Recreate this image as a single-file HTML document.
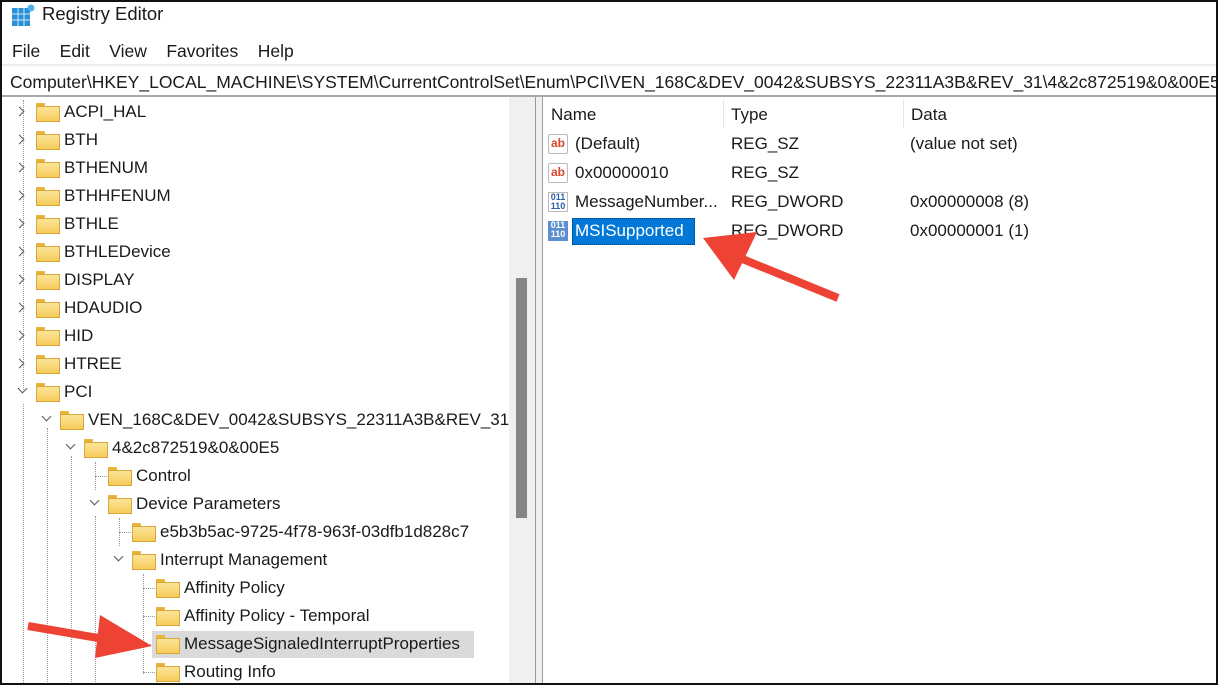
<!DOCTYPE html>
<html><head><meta charset="utf-8"><style>
*{margin:0;padding:0;box-sizing:border-box}
html,body{overflow:hidden}
body{width:1218px;height:685px;background:#fff;font-family:"Liberation Sans",sans-serif;color:#1a1a1a;position:relative}
.a{position:absolute;white-space:nowrap}
.t{font-size:17px;line-height:28px}
.f{position:absolute;width:22px;height:17px}
.f:before{content:"";position:absolute;left:0;top:0;width:9px;height:4px;background:#e8b43a;border-radius:1px 1px 0 0}
.f:after{content:"";position:absolute;left:0;top:3px;width:22px;height:14px;background:linear-gradient(#fbe59b,#f5cc5a);border:1px solid #dba73a}
.ch{position:absolute;width:7px;height:7px;border-right:1.5px solid #555;border-bottom:1.5px solid #555}
.r{transform:rotate(-45deg)}
.d{transform:rotate(45deg)}
.vl{position:absolute;border-left:1px dotted #999;width:0}
.hl{position:absolute;border-top:1px dotted #999;height:0}
.ic{position:absolute;width:20px;height:20px;font-size:12px;font-weight:bold;text-align:center;line-height:16px}
#clip{position:absolute;left:0;top:97px;width:509px;height:588px;overflow:hidden}
#clip>div{position:absolute;left:0;top:-97px;width:509px;height:685px}
</style></head><body>
<svg class="a" style="left:12px;top:4px" width="24" height="22"><rect x="0" y="4" width="18" height="18" fill="#2b8fd6"/><g stroke="#cde8fa" stroke-width="1"><line x1="6" y1="4" x2="6" y2="22"/><line x1="12" y1="4" x2="12" y2="22"/><line x1="0" y1="10" x2="18" y2="10"/><line x1="0" y1="16" x2="18" y2="16"/></g><circle cx="19" cy="4" r="3.5" fill="#4fb0ee"/></svg>
<div class="a" style="left:42px;top:2px;font-size:18.5px;line-height:24px">Registry Editor</div>
<div class="a" style="left:12px;top:39px;font-size:17.5px;line-height:24px">File&nbsp;&nbsp;&nbsp;&nbsp;Edit&nbsp;&nbsp;&nbsp;&nbsp;View&nbsp;&nbsp;&nbsp;&nbsp;Favorites&nbsp;&nbsp;&nbsp;&nbsp;Help</div>
<div class="a" style="left:0;top:64px;width:1218px;height:2px;background:#eee"></div>
<div class="a" style="left:0;top:68px;width:1218px;height:28px;overflow:hidden"><div class="a" style="left:10px;top:0;font-size:17.5px;line-height:28px">Computer\HKEY_LOCAL_MACHINE\SYSTEM\CurrentControlSet\Enum\PCI\VEN_168C&amp;DEV_0042&amp;SUBSYS_22311A3B&amp;REV_31\4&amp;2c872519&amp;0&amp;00E5\Device Parameters</div></div>
<div class="a" style="left:0;top:95px;width:1218px;height:2px;background:#a8a8a8"></div>
<div id="clip"><div>
<div class="vl" style="left:23px;top:100px;height:290px"></div>
<div class="vl" style="left:23px;top:404px;height:285px"></div>
<div class="vl" style="left:47px;top:428px;height:260px"></div>
<div class="vl" style="left:71px;top:456px;height:230px"></div>
<div class="vl" style="left:95px;top:462px;height:28px"></div><div class="hl" style="left:95px;top:476px;width:12px"></div>
<div class="vl" style="left:95px;top:516px;height:170px"></div>
<div class="vl" style="left:119px;top:518px;height:28px"></div><div class="hl" style="left:119px;top:532px;width:12px"></div>
<div class="vl" style="left:143px;top:574px;height:100px"></div>
<div class="hl" style="left:143px;top:588px;width:12px"></div><div class="hl" style="left:143px;top:616px;width:12px"></div><div class="hl" style="left:143px;top:644px;width:12px"></div><div class="hl" style="left:143px;top:672px;width:12px"></div>
<div class="a" style="left:152px;top:631px;width:322px;height:27px;background:#dadada"></div>
<div id="tree"></div>
</div></div>
<script>
var rows=[[0,'r','ACPI_HAL'],[0,'r','BTH'],[0,'r','BTHENUM'],[0,'r','BTHHFENUM'],[0,'r','BTHLE'],[0,'r','BTHLEDevice'],[0,'r','DISPLAY'],[0,'r','HDAUDIO'],[0,'r','HID'],[0,'r','HTREE'],[0,'d','PCI'],[1,'d','VEN_168C&DEV_0042&SUBSYS_22311A3B&REV_31'],[2,'d','4&2c872519&0&00E5'],[3,'','Control'],[3,'d','Device Parameters'],[4,'','e5b3b5ac-9725-4f78-963f-03dfb1d828c7'],[4,'d','Interrupt Management'],[5,'','Affinity Policy'],[5,'','Affinity Policy - Temporal'],[5,'','MessageSignaledInterruptProperties'],[5,'','Routing Info']];
var h='';rows.forEach(function(r,i){var y=112+i*28,x=r[0]*24;
if(r[1]=='r')h+='<div class="ch r" style="left:'+(x+16)+'px;top:'+(y-4)+'px"></div>';
if(r[1]=='d')h+='<div class="ch d" style="left:'+(x+19)+'px;top:'+(y-7)+'px"></div>';
h+='<div class="f" style="left:'+(x+36)+'px;top:'+(y-9)+'px"></div>';
h+='<div class="a t" style="left:'+(x+64)+'px;top:'+(y-14)+'px">'+r[2].replace(/&/g,'&amp;')+'</div>';});
document.getElementById('tree').innerHTML=h;
</script>
<div class="a" style="left:509px;top:97px;width:26px;height:588px;background:#f0f0f0"></div>
<div class="a" style="left:516px;top:278px;width:11px;height:240px;background:#858585"></div>
<div class="a" style="left:535px;top:97px;width:1px;height:588px;background:#999"></div>
<div class="a" style="left:536px;top:97px;width:6px;height:588px;background:#f0f0f0"></div>
<div class="a" style="left:542px;top:97px;width:1px;height:588px;background:#999"></div>
<div class="a t" style="left:551px;top:101px">Name</div>
<div class="a" style="left:723px;top:100px;width:1px;height:28px;background:#e5e5e5"></div>
<div class="a t" style="left:731px;top:101px">Type</div>
<div class="a" style="left:903px;top:100px;width:1px;height:28px;background:#e5e5e5"></div>
<div class="a t" style="left:911px;top:101px">Data</div>
<div class="ic" style="left:548px;top:134px;color:#d9462b;background:#fff;border:1px solid #bbb;border-radius:2px">ab</div>
<div class="ic" style="left:548px;top:163px;color:#d9462b;background:#fff;border:1px solid #bbb;border-radius:2px">ab</div>
<div class="ic" style="left:548px;top:192px;color:#2a5ea8;font-size:9px;line-height:9px;border:1px solid #bbb">011<br>110</div>
<div class="ic" style="left:548px;top:221px;color:#fff;background:#5b8fd0;font-size:9px;line-height:9px">011<br>110</div>
<div class="a" style="left:572px;top:218px;width:123px;height:27px;background:#0078d7;border:1px dotted #003a70"></div>
<div class="a t" style="left:575px;top:130px">(Default)</div><div class="a t" style="left:731px;top:130px">REG_SZ</div><div class="a t" style="left:910px;top:130px">(value not set)</div>
<div class="a t" style="left:575px;top:159px">0x00000010</div><div class="a t" style="left:731px;top:159px">REG_SZ</div>
<div class="a t" style="left:575px;top:188px">MessageNumber...</div><div class="a t" style="left:731px;top:188px">REG_DWORD</div><div class="a t" style="left:910px;top:188px">0x00000008 (8)</div>
<div class="a t" style="left:575px;top:217px;color:#fff">MSISupported</div><div class="a t" style="left:731px;top:217px">REG_DWORD</div><div class="a t" style="left:910px;top:217px">0x00000001 (1)</div>
<svg class="a" style="left:0;top:0" width="1218" height="685">
<line x1="838" y1="298" x2="740" y2="258" stroke="#ee4234" stroke-width="8"/>
<polygon points="703,238 757,232 734,280" fill="#ee4234"/>
<line x1="28" y1="626" x2="110" y2="640" stroke="#ee4234" stroke-width="8"/>
<polygon points="152,646 100,615 95,658" fill="#ee4234"/>
<rect x="1" y="1" width="1216" height="683" fill="none" stroke="#111" stroke-width="2"/>
</svg>
</body></html>
